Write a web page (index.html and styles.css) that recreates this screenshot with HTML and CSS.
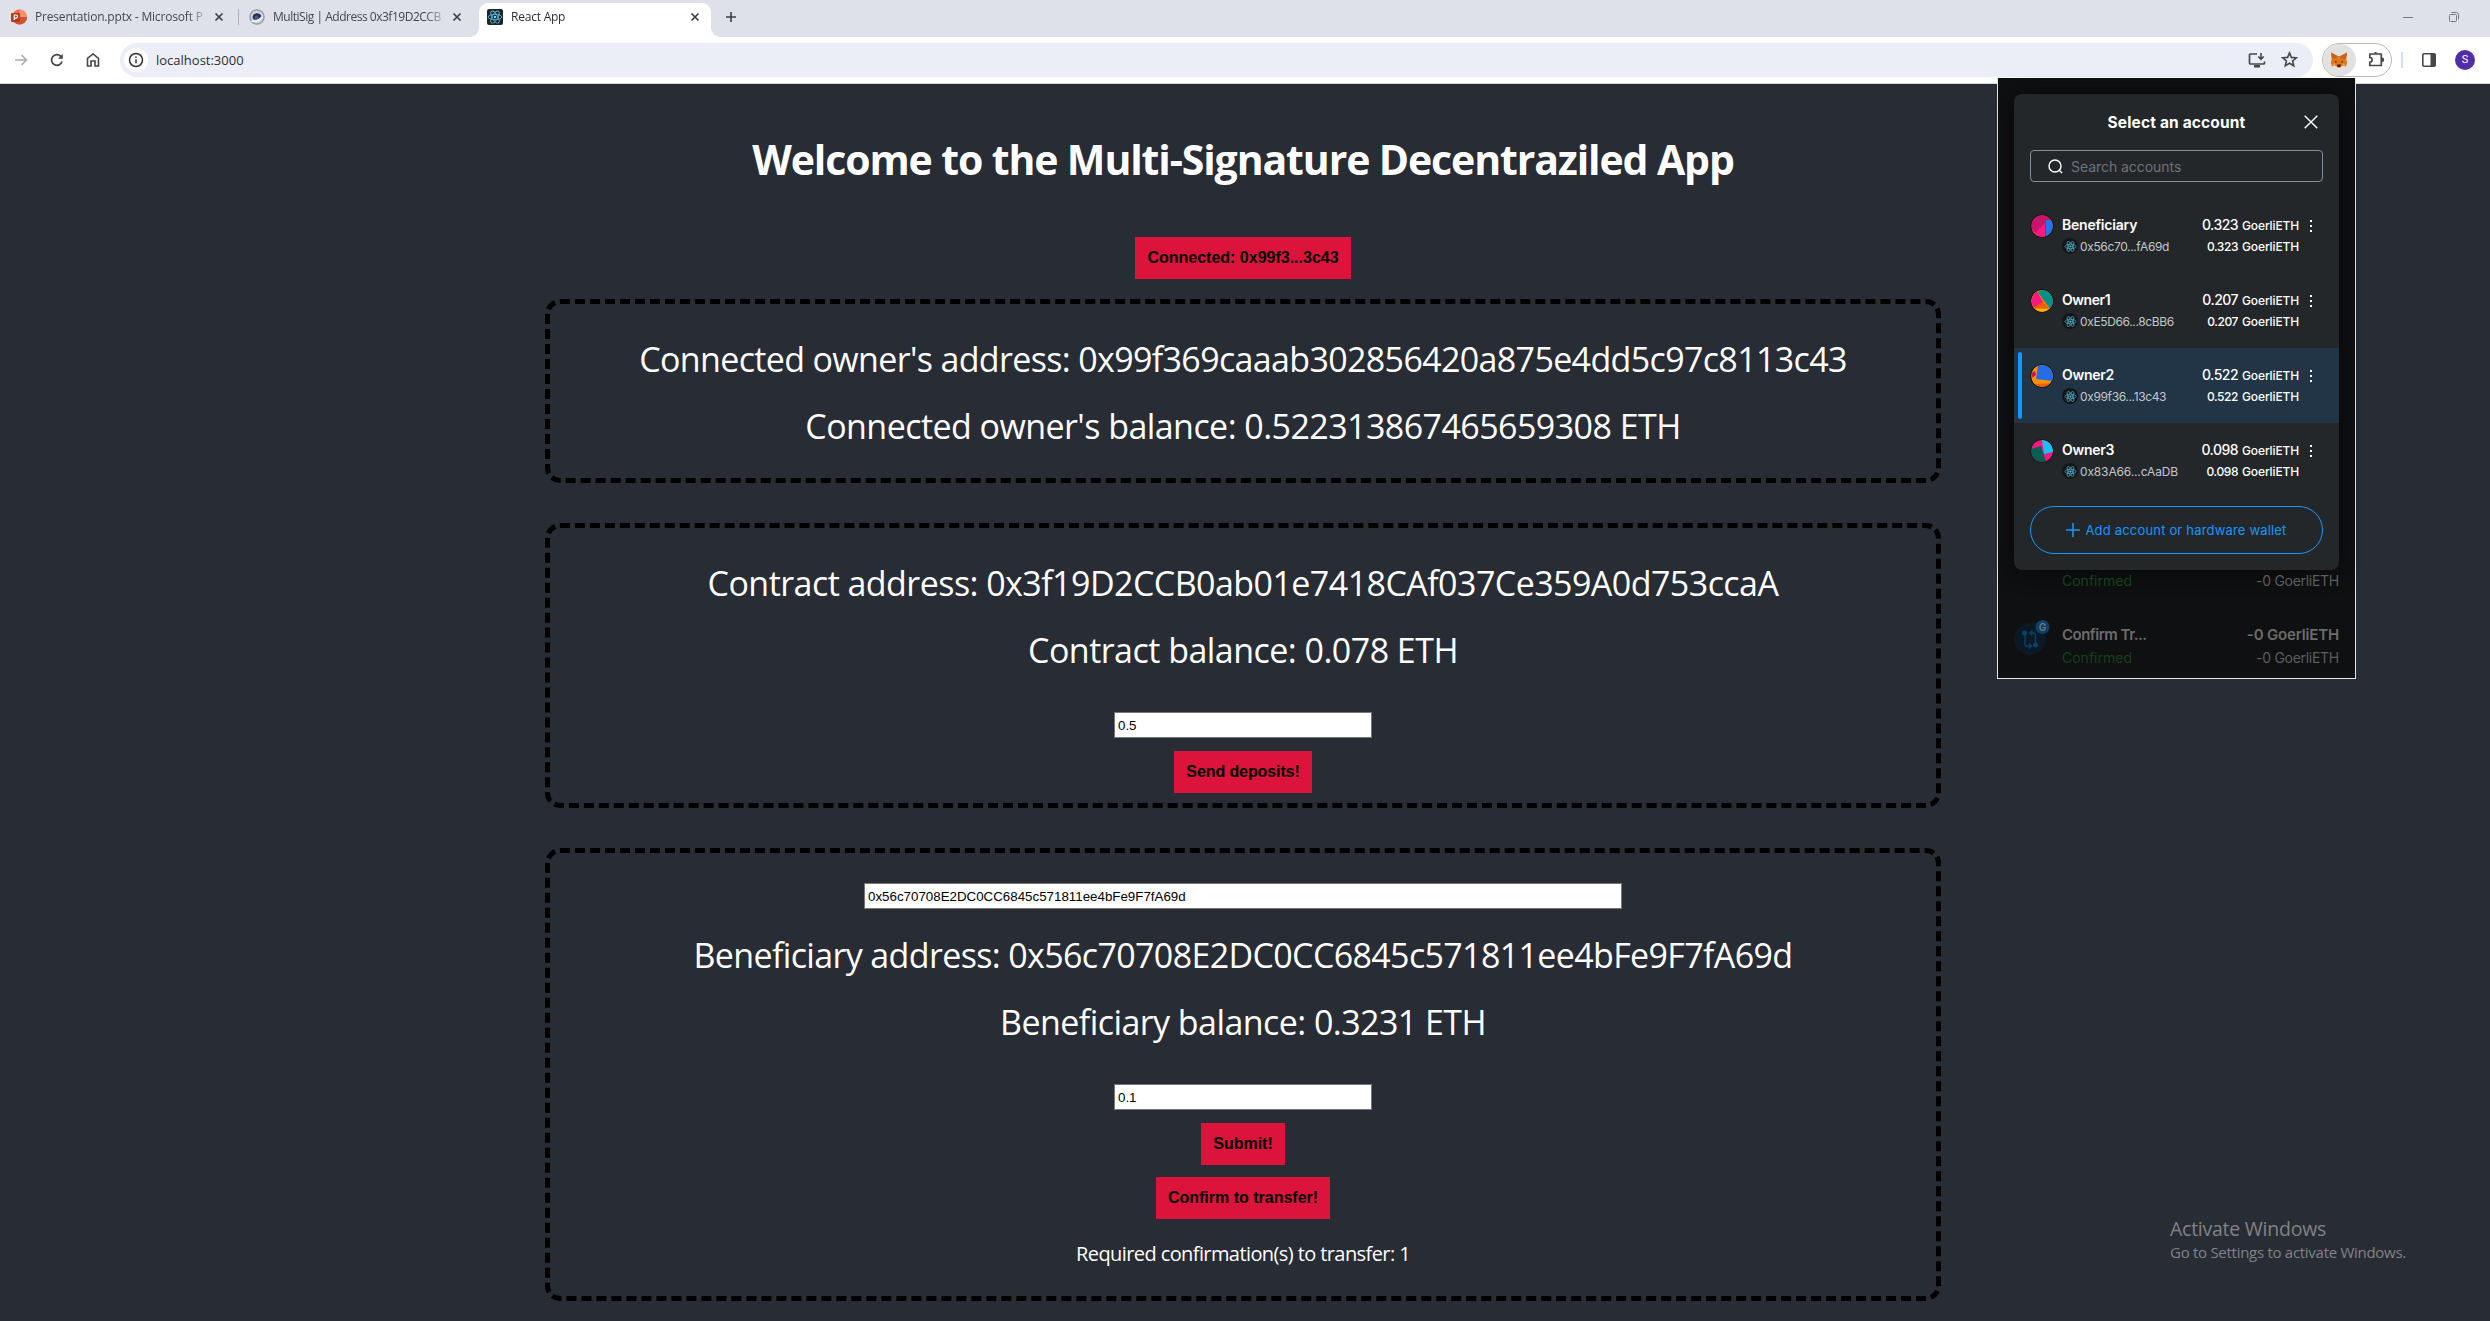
FILE: index.html
```html
<!DOCTYPE html>
<html lang="en">
<head>
<meta charset="utf-8">
<title>React App</title>
<link rel="stylesheet" href="styles.css">
</head>
<body>
<svg width="0" height="0" class="defs">
  <defs>
    <symbol id="react" viewBox="0 0 16 16">
      <circle cx="8" cy="8" r="1.3" fill="#61dafb"/>
      <g fill="none" stroke="#52b4cf" stroke-width=".9">
        <ellipse cx="8" cy="8" rx="6.8" ry="2.7"/>
        <ellipse cx="8" cy="8" rx="6.8" ry="2.7" transform="rotate(60 8 8)"/>
        <ellipse cx="8" cy="8" rx="6.8" ry="2.7" transform="rotate(120 8 8)"/>
      </g>
    </symbol>
    <symbol id="close" viewBox="0 0 10 10"><path d="M1.5 1.5l7 7M8.500 1.500l-7 7" stroke="#3c4043" stroke-width="1.7"/></symbol>
  </defs>
</svg>
<header class="tabs">
  <div class="tab">
    <svg class="favicon" viewBox="0 0 16 16"><circle cx="8.500" cy="8" r="7.500" fill="#ed6c47"/><path d="M8.500.5a7.500 7.500 0 0 1 7.500 7.500H8.500z" fill="#ff8f6b"/><path d="M1 8h15a7.500 7.500 0 0 1-15 0z" fill="#d35230"/><rect x="0" y="4" width="9" height="9" rx="1" fill="#b9391a"/><path d="M3.300 11V6h1.700a1.500 1.500 0 0 1 0 3.100H3.300" fill="none" stroke="#fff" stroke-width="1.200"/></svg>
    <span class="label"><span class="t-ppt">Presentation.pptx - Microsoft P</span></span>
    <svg class="x"><use href="#close"/></svg>
  </div>
  <div class="sep"></div>
  <div class="tab second">
    <svg class="favicon" viewBox="0 0 16 16"><circle cx="8" cy="8" r="7" fill="#d3d8df" stroke="#979fa8" stroke-width="1.500"/><path d="M3.500 8.500a4.700 4.700 0 0 1 9-1.500C11 9.500 7 11.500 4.500 10.500z" fill="#21325b"/><circle cx="7.500" cy="8.500" r="2" fill="#4a5c80"/><path d="M2.500 12c4 1 8-.5 11-4" fill="none" stroke="#f4f6f8" stroke-width="1.500"/></svg>
    <span class="label"><span class="t-multi">MultiSig | Address 0x3f19D2CCB</span></span>
    <svg class="x"><use href="#close"/></svg>
  </div>
  <div class="tab active">
    <svg class="favicon" viewBox="0 0 16 16"><rect width="16" height="16" rx="2" fill="#20232a"/><use href="#react" width="16" height="16"/></svg>
    <span class="label"><span class="t-react">React App</span></span>
    <svg class="x"><use href="#close"/></svg>
  </div>
  <svg class="newtab" viewBox="0 0 12 12"><path d="M6 1v10M1 6h10" stroke="#3c4043" stroke-width="1.600"/></svg>
  <div class="win">
    <svg width="10" height="10"><path d="M0 5.500h10" stroke="#777b80"/></svg>
    <svg width="10" height="10" viewBox="0 0 10 10"><rect x=".5" y="2.500" width="7" height="7" rx="1" fill="none" stroke="#777b80"/><path d="M2.500.5h5a2 2 0 0 1 2 2v5" fill="none" stroke="#777b80"/></svg>
  </div>
</header>
<nav class="toolbar">
  <svg class="nav" viewBox="0 0 14 14"><path d="M1 7h11M7.500 2l5 5-5 5" fill="none" stroke="#a9abae" stroke-width="1.600"/></svg>
  <svg class="nav" viewBox="0 0 14 14"><path d="M12 8.500A5.300 5.300 0 1 1 10.800 3.400L12 4.600" fill="none" stroke="#474747" stroke-width="1.700"/><path d="M12.800.8v5H8z" fill="#474747"/></svg>
  <svg class="nav" viewBox="0 0 14 14"><path d="M1.500 13V5.500L7 1l5.500 4.500V13H9V8H5v5z" fill="none" stroke="#474747" stroke-width="1.600"/></svg>
  <div class="omnibox">
    <span class="info"><svg width="16" height="16" viewBox="0 0 16 16"><circle cx="8" cy="8" r="6.500" fill="none" stroke="#333" stroke-width="1.500"/><path d="M8 7.200v4M8 4.500v1.500" stroke="#333" stroke-width="1.500"/></svg></span>
    <span class="url">localhost:3000</span>
    <svg class="install" viewBox="0 0 18 16"><path d="M9 2H2.500Q1.500 2 1.500 3v8q0 1 1 1h13q1 0 1-1V9.500" fill="none" stroke="#474747" stroke-width="1.700"/><path d="M6 13h6v2.500H6z" fill="#474747"/><path d="M13 1v6M10.300 4.500L13 7.300l2.700-2.800" fill="none" stroke="#474747" stroke-width="1.600"/></svg>
    <svg class="star" viewBox="0 0 16 16"><path d="M8 1.800l1.800 4.200 4.600.4-3.500 3 1.100 4.500L8 11.500l-4 2.400 1.100-4.500-3.500-3 4.600-.4z" fill="none" stroke="#474747" stroke-width="1.500"/></svg>
  </div>
  <div class="ext">
    <span class="fox"><svg width="18" height="16" viewBox="0 0 18 16"><path d="M1 .5l6.500 3.500h3L17 .5l-.8 6.500 1 3.500-1.200 4-3.500-1-2 2h-3l-2-2-3.500 1-1.200-4 1-3.500z" fill="#e2761b"/><path d="M1 .5l6.500 3.500-1.500 2.500-4 .5zM17 .5l-6.500 3.500 1.500 2.500 4 .5z" fill="#c5651a"/><path d="M5 8.500l2 1.500-1.500 1zM13 8.500l-2 1.500 1.500 1z" fill="#333"/><path d="M7.200 12.500h3.600l-.5 2.500H7.700z" fill="#2a1d14"/><path d="M2 14.500l3.500-1-1-2.500zM16 14.500l-3.500-1 1-2.500z" fill="#f0a35e"/></svg></span>
    <svg class="puzzle" viewBox="0 0 17 17"><path d="M1.800 3h11.500v11.500H1.800v-3.300a2.300 2.300 0 0 0 0-4.700z" fill="none" stroke="#474747" stroke-width="1.700" stroke-linejoin="round"/><path d="M5.500 2.500a2.200 2.200 0 0 1 4.200 0zM14 6.500a2.200 2.200 0 0 1 0 4.400z" fill="#474747"/></svg>
  </div>
  <i class="divider"></i>
  <svg class="panel" viewBox="0 0 14 14"><rect x=".8" y=".8" width="12.400" height="12.400" rx="1" fill="none" stroke="#474747" stroke-width="1.600"/><path d="M8.500 1H13v12H8.500z" fill="#474747"/></svg>
  <span class="user">S</span>
</nav>
<main class="app">
  <h1>Welcome to the Multi-Signature Decentraziled App</h1>
  <button class="btn b-conn">Connected: 0x99f3...3c43</button>
  <section class="card first">
    <p class="w-oa">Connected owner's address: 0x99f369caaab302856420a875e4dd5c97c8113c43</p>
    <p class="w-ob">Connected owner's balance: 0.522313867465659308 ETH</p>
  </section>
  <section class="card deposit">
    <p class="w-ca">Contract address: 0x3f19D2CCB0ab01e7418CAf037Ce359A0d753ccaA</p>
    <p class="w-cb">Contract balance: 0.078 ETH</p>
    <input class="amount" value="0.5">
    <button class="btn b-send">Send deposits!</button>
  </section>
  <section class="card transfer">
    <input class="address" value="0x56c70708E2DC0CC6845c571811ee4bFe9F7fA69d">
    <p class="w-ba">Beneficiary address: 0x56c70708E2DC0CC6845c571811ee4bFe9F7fA69d</p>
    <p class="w-bb">Beneficiary balance: 0.3231 ETH</p>
    <input class="amount" value="0.1">
    <button class="btn b-sub">Submit!</button>
    <button class="btn b-conf">Confirm to transfer!</button>
    <p class="req">Required confirmation(s) to transfer: 1</p>
  </section>
</main>
<aside class="wallet">
  <div class="modal">
    <div class="modal-head"><span>Select an account</span><svg viewBox="0 0 14 14"><path d="M.7.700l12.600 12.600M13.300.7L.7 13.300" stroke="#fff" stroke-width="1.400"/></svg></div>
    <div class="search"><svg viewBox="0 0 15 15"><circle cx="7" cy="7" r="6" fill="none" stroke="#fff" stroke-width="1.400"/><path d="M11.300 11.300l2.700 2.700" stroke="#fff" stroke-width="1.400"/></svg><span>Search accounts</span></div>
    <div class="row">
      <svg class="avatar" viewBox="0 0 22 22"><circle cx="11" cy="11" r="11" fill="#c8146a"/><path d="M3 19L14 8v14Q7 22 3 19z" fill="#fb1881"/><path d="M15 5h5.200Q22 8 22 11q0 7-7 10.300z" fill="#2376e3"/><path d="M.5 14l4 4-1.500.7z" fill="#f5451c"/></svg>
      <div class="who"><b class="w-n0">Beneficiary</b><span><i class="net"><svg><use href="#react"/></svg></i><em>0x56c70...fA69d</em></span></div>
      <div class="bal"><div><b>0.323</b><em>GoerliETH</em></div><div><b class="s">0.323</b><em>GoerliETH</em></div></div>
      <svg class="dots" viewBox="0 0 4 12"><path d="M1 0h2v2H1zM1 5h2v2H1zM1 10h2v2H1z" fill="#fff"/></svg>
    </div>
    <div class="row">
      <svg class="avatar" viewBox="0 0 22 22"><circle cx="11" cy="11" r="11" fill="#fa7a00"/><path d="M7 2.500Q9 0 11 0a11 11 0 0 1 8 18.500z" fill="#03908b"/><path d="M6 1.500L12 12l-9 5.500Q-3 8 6 1.500z" fill="#fb1881"/><path d="M3.500 18.500h15Q11 25 3.500 18.500z" fill="#fab700"/><path d="M12 12l5.500 6.500H3L3 17.500z" fill="#fb5c02"/></svg>
      <div class="who"><b class="w-n1">Owner1</b><span><i class="net"><svg><use href="#react"/></svg></i><em>0xE5D66...8cBB6</em></span></div>
      <div class="bal"><div><b>0.207</b><em>GoerliETH</em></div><div><b class="s">0.207</b><em>GoerliETH</em></div></div>
      <svg class="dots" viewBox="0 0 4 12"><path d="M1 0h2v2H1zM1 5h2v2H1zM1 10h2v2H1z" fill="#fff"/></svg>
    </div>
    <div class="row selected">
      <svg class="avatar" viewBox="0 0 22 22"><circle cx="11" cy="11" r="11" fill="#f99200"/><path d="M7 .800Q9 0 11 0A11 11 0 0 1 22 11v5L5 14z" fill="#246de4"/><path d="M.5 8l3.500-2 1 4-4.500 3z" fill="#c8144c"/><path d="M4 19l15-.5Q12 25 4 19z" fill="#f55b13"/></svg>
      <div class="who"><b>Owner2</b><span><i class="net"><svg><use href="#react"/></svg></i><em>0x99f36...13c43</em></span></div>
      <div class="bal"><div><b>0.522</b><em>GoerliETH</em></div><div><b class="s">0.522</b><em>GoerliETH</em></div></div>
      <svg class="dots" viewBox="0 0 4 12"><path d="M1 0h2v2H1zM1 5h2v2H1zM1 10h2v2H1z" fill="#fff"/></svg>
    </div>
    <div class="row">
      <svg class="avatar" viewBox="0 0 22 22"><circle cx="11" cy="11" r="11" fill="#fb1881"/><path d="M11 0A11 11 0 0 1 22 12l-9 2z" fill="#18c2f2"/><path d="M0 9l10-3 5 15.200A11 11 0 0 1 0 9z" fill="#035e56"/></svg>
      <div class="who"><b>Owner3</b><span><i class="net"><svg><use href="#react"/></svg></i><em class="w-a3">0x83A66...cAaDB</em></span></div>
      <div class="bal"><div><b>0.098</b><em>GoerliETH</em></div><div><b class="s">0.098</b><em>GoerliETH</em></div></div>
      <svg class="dots" viewBox="0 0 4 12"><path d="M1 0h2v2H1zM1 5h2v2H1zM1 10h2v2H1z" fill="#fff"/></svg>
    </div>
    <div class="add"><svg viewBox="0 0 14 14"><path d="M7 0v14M0 7h14" stroke="#1098fc" stroke-width="1.600"/></svg><span>Add account or hardware wallet</span></div>
  </div>
  <div class="activity">
    <div class="line small"><span class="ok">Confirmed</span><span class="w-g">-0 GoerliETH</span></div>
    <div class="line big"><b class="w-ct">Confirm Tr...</b><b class="w-gb">-0 GoerliETH</b></div>
    <div class="line small"><span class="ok">Confirmed</span><span class="w-g">-0 GoerliETH</span></div>
    <svg class="swap" viewBox="0 0 36 36"><circle cx="16" cy="20" r="16" fill="#0c1823"/><g fill="none" stroke="#07426e" stroke-width="1.400"><path d="M11 16v9q0 2 2 2h4M15 24.500l2.500 2.500-2.500 2.500M21.500 25v-9q0-2-2-2h-3M18.500 11.500L16 14l2.500 2.500"/></g><circle cx="10.500" cy="14" r="2.500" fill="#07426e"/><circle cx="21.500" cy="26" r="2.500" fill="#07426e"/><circle cx="28.500" cy="8" r="7" fill="#07426e"/><text x="28.500" y="11.500" text-anchor="middle" font-size="10" font-weight="600" fill="#777">G</text></svg>
  </div>
</aside>
<div class="watermark"><div class="w-act">Activate Windows</div><div class="w-go">Go to Settings to activate Windows.</div></div>
</body>
</html>
```
FILE: styles.css
```css
* { box-sizing: border-box; }
body { margin: 0; width: 2490px; height: 1321px; overflow: hidden; position: relative; background: #282c34; font-family: "Open Sans", "Noto Sans", sans-serif; color: #fff; }
svg { display: block; flex: none; }
.defs { position: absolute; }
i, em { font-style: normal; }

/* browser frame */
.tabs { height: 37px; background: #dee1e9; display: flex; color: #45474a; font-size: 12px; line-height: 16px; }
.tab { display: flex; align-items: center; width: 238px; height: 37px; padding: 0 14px 3px 11px; }
.tab .favicon { width: 16px; height: 16px; margin-right: 8px; }
.tab .label { width: 169px; overflow: hidden; white-space: nowrap; -webkit-mask-image: linear-gradient(90deg, #000 90%, rgba(0, 0, 0, .3)); }
.tab .x { width: 10px; height: 10px; margin-left: 10px; }
.t-ppt { letter-spacing: -.18px; }
.t-multi { letter-spacing: -.48px; }
.t-react { letter-spacing: -.22px; }
.sep { width: 1px; height: 16px; margin: 9px 0 0; background: #aeb2b9; }
.tab.second { padding-left: 10px; }
.tab.active { width: 232px; height: 34px; margin-top: 3px; padding: 0 11px 6px 8px; margin-left: 2px; background: #fff; border-radius: 9px 9px 0 0; color: #2d2e30; position: relative; }
.tab.active::before, .tab.active::after { content: ""; position: absolute; bottom: 0; width: 9px; height: 9px; background: radial-gradient(circle at 0 0, transparent 8.5px, #fff 9px); left: -9px; }
.tab.active::after { left: auto; right: -9px; background: radial-gradient(circle at 100% 0, transparent 8.5px, #fff 9px); }
.newtab { width: 12px; height: 12px; margin: 11px 0 0 14px; }
.win { display: flex; gap: 36px; margin: 12px 31px 0 auto; }
.toolbar { height: 47px; background: #fff; border-bottom: 1px solid #d5d7dc; display: flex; align-items: center; padding: 0 15px 1px 14px; }
.nav { width: 14px; height: 14px; margin-right: 22px; }
.omnibox { flex: none; width: 2193px; height: 34px; margin-left: -2px; border-radius: 17px; background: #ebeef7; display: flex; align-items: center; padding-left: 4px; }
.info { width: 24px; height: 24px; border-radius: 50%; background: #fff; display: grid; place-items: center; }
.url { margin-left: 8px; font-size: 13px; color: #2d2e30; }
.install { width: 18px; height: 16px; margin-left: auto; }
.star { width: 17px; height: 17px; margin: 0 15px 0 15px; }
.ext { display: flex; align-items: center; width: 70px; height: 34px; margin-left: 9px; border: 1px solid #b9babd; border-radius: 17px; }
.fox { width: 33px; height: 32px; border-radius: 16px; background: #e1e1e1; display: grid; place-items: center; padding-right: 1px; }
.puzzle { width: 17px; height: 17px; margin-left: 12px; }
.divider { width: 2px; height: 16px; background: #d3e2fb; margin: 0 19px 0 9px; }
.panel { width: 14px; height: 14px; margin-right: 19px; }
.user { width: 20px; height: 20px; border-radius: 50%; background: #512da8; font: 11px/20px Roboto, sans-serif; text-align: center; }

/* page */
.app { display: flex; flex-direction: column; align-items: center; width: 2486px; padding-top: 48px; white-space: nowrap; }
h1 { margin: 0; font-size: 41px; line-height: 54px; font-weight: 700; letter-spacing: -1.12px; }
.btn { display: flex; justify-content: center; align-items: center; height: 42px; padding: 0; border: 0; background: #dc143c; color: #000; font: bold 16px "Liberation Sans", Arial, sans-serif; }
.b-conn { width: 216px; margin: 51px 0 20px; }
.b-send { width: 138px; letter-spacing: -.1px; }
.b-sub { width: 84px; margin-bottom: 12px; }
.b-conf { width: 174px; }
.card { display: flex; flex-direction: column; align-items: center; width: 1396px; border: 5px dashed #000; border-radius: 15px; margin-bottom: 40px; }
.card p { margin: 0 0 20px; font-size: 34px; line-height: 47px; }
.card .w-oa { letter-spacing: -.65px; }
.card .w-ob { letter-spacing: -.56px; }
.card .w-ca { letter-spacing: -.55px; }
.card .w-cb { letter-spacing: -.53px; }
.card .w-ba { letter-spacing: -.64px; }
.card .w-bb { letter-spacing: -.56px; }
.first { height: 184px; padding-top: 32px; }
.deposit { height: 285px; padding-top: 32px; }
.transfer { height: 453px; padding-top: 30px; }
input { height: 26px; border: 1px solid #767676; padding: 0 3px; font: 13.333px "Liberation Sans", Arial, sans-serif; color: #000; background: #fff; border-radius: 0; }
.amount { width: 258px; margin: 18px 0 13px; }
.address { width: 758px; margin-bottom: 23px; }
.card .req { font-size: 20px; line-height: 27px; margin: 21px 0 0; letter-spacing: -.59px; }

/* wallet popup */
.wallet { position: absolute; left: 1997px; top: 78px; width: 359px; height: 601px; background: #0f1011; border: 1px solid #e6e6e6; border-top: 0; padding: 16px 16px 0; font-family: Inter, sans-serif; white-space: nowrap; }
.modal { width: 325px; height: 476px; background: #24272a; border-radius: 8px; position: relative; box-shadow: 0 2px 20px #08090a; }
.modal-head { display: grid; grid-template-columns: 1fr auto 1fr; align-items: center; height: 56px; font-size: 15.500px; font-weight: 700; letter-spacing: .15px; }
.modal-head span { grid-column: 2; }
.modal-head svg { width: 14px; height: 14px; justify-self: end; margin-right: 21px; }
.search { display: flex; align-items: center; gap: 8px; height: 32px; margin: 0 16px 16px; border: 1px solid #858b9a; border-radius: 4px; padding-left: 17px; font-size: 14px; color: #6f7276; letter-spacing: -.05px; }
.search svg { width: 15px; height: 15px; }
.row { display: flex; height: 75px; padding: 16px 26px 0 16px; }
.selected { background: #213547; position: relative; }
.selected::before { content: ""; position: absolute; left: 4px; top: 4px; width: 4px; height: 67px; border-radius: 3px; background: #1098fc; }
.avatar { width: 24px; height: 24px; border: 1px solid #141618; border-radius: 50%; }
.who { margin-left: 8px; }
.who b { display: block; font-size: 14px; line-height: 22px; height: 22px; font-weight: 600; letter-spacing: -.27px; }
.who .w-n0 { letter-spacing: -.2px; }
.who .w-n1 { letter-spacing: -.45px; }
.who > span { display: flex; align-items: center; height: 20px; font-size: 12px; color: #c3c7cb; letter-spacing: -.36px; }
.who .w-a3 { letter-spacing: -.14px; }
.net { width: 16px; height: 16px; border-radius: 50%; background: #141618; display: grid; place-items: center; margin-right: 2px; }
.net svg { width: 13px; height: 13px; }
.bal { margin-left: auto; }
.bal div { display: flex; justify-content: flex-end; align-items: baseline; gap: 4px; height: 22px; line-height: 22px; font-size: 12px; }
.bal b { font-size: 14px; font-weight: 500; letter-spacing: -.52px; }
.bal b.s { font-size: 12px; letter-spacing: -.42px; }
.bal em { font-weight: 500; letter-spacing: -.13px; }
.dots { width: 4px; height: 12px; margin: 6px 0 0 10px; }
.add { display: flex; align-items: center; justify-content: center; gap: 5px; height: 48px; margin: 8px 16px 0; border: 1px solid #1098fc; border-radius: 24px; font-size: 13px; letter-spacing: .18px; color: #1098fc; }
.add svg { width: 14px; height: 14px; }
.activity { position: relative; padding: 0 0 0 48px; margin-top: 1px; }
.line { display: flex; justify-content: space-between; color: #5c5d5e; }
.small { font-size: 14px; line-height: 20px; height: 20px; }
.big { font-size: 15px; line-height: 24px; height: 25px; margin-top: 32px; color: #6b6c6d; }
.big b { font-weight: 600; }
.w-ct { letter-spacing: -.5px; }
.w-gb { letter-spacing: -.16px; }
.w-g { letter-spacing: -.28px; }
.ok { color: #14401c; }
.swap { position: absolute; left: 0; top: 48px; width: 36px; height: 36px; }

.watermark { position: absolute; left: 2170px; top: 1215px; color: #808386; font-size: 19.500px; line-height: 27px; white-space: nowrap; }
.w-act { letter-spacing: -.25px; }
.watermark .w-go { font-size: 15px; line-height: 20px; letter-spacing: -.28px; }
```
